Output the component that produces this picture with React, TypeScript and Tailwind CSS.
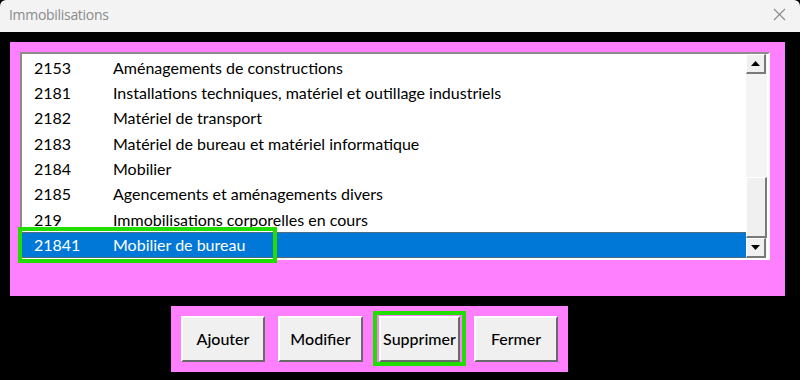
import React from "react";

const rows: [string, string][] = [
  ["2153", "Aménagements de constructions"],
  ["2181", "Installations techniques, matériel et outillage industriels"],
  ["2182", "Matériel de transport"],
  ["2183", "Matériel de bureau et matériel informatique"],
  ["2184", "Mobilier"],
  ["2185", "Agencements et aménagements divers"],
  ["219", "Immobilisations corporelles en cours"],
  ["21841", "Mobilier de bureau"],
];

const listFont = { fontFamily: "Lato, 'Open Sans', sans-serif" };

function Btn({ label, w }: { label: string; w: string }) {
  return (
    <button
      className={`h-[46px] ${w} bg-[#f0f0f0] border-t-2 border-l-2 border-t-white border-l-white border-b-2 border-r-2 border-b-[#6a6a6a] border-r-[#6a6a6a] text-[16px] font-medium text-black`}
      style={listFont}
    >
      {label}
    </button>
  );
}

function ScrollBtn({ down }: { down?: boolean }) {
  return (
    <div className="h-[20px] w-[20px] bg-[#f0f0f0] border-t border-l border-t-white border-l-white border-b-2 border-r-2 border-b-[#7a7a7a] border-r-[#7a7a7a] flex items-center justify-center">
      <svg width="9" height="5" viewBox="0 0 9 5">
        {down ? <polygon points="0,0 9,0 4.5,5" fill="#000" /> : <polygon points="0,5 9,5 4.5,0" fill="#000" />}
      </svg>
    </div>
  );
}

export default function App() {
  return (
    <div className="w-[800px] h-[380px] bg-black flex flex-col overflow-hidden">
      <div
        className="h-[32px] bg-[#f3f3f3] rounded-t-[6px] flex items-center justify-between pl-[9px] pr-[14px] pb-[3px]"
        style={{ fontFamily: "'Open Sans', 'Noto Sans', sans-serif" }}
      >
        <span className="text-[14px] text-[#8a8a8a] tracking-[-0.3px]">Immobilisations</span>
        <svg width="13" height="13" viewBox="0 0 13 13">
          <path d="M1 1 L12 12 M12 1 L1 12" stroke="#8a8a8a" strokeWidth="1.1" fill="none" />
        </svg>
      </div>
      <div className="pl-[10px] pt-[10px]">
        <div className="w-[775px] h-[254px] bg-[#ff80ff] p-[10px]">
          <div className="relative w-[750px] h-[208px] bg-white border-t-2 border-l-2 border-t-[#8c8c8c] border-l-[#8c8c8c] border-b-2 border-r-2 border-b-white border-r-[#f8f8f8] flex">
            <div className="flex-1 pt-[1px]" style={listFont}>
              {rows.map(([code, label], i) => {
                const sel = i === rows.length - 1;
                return (
                  <div
                    key={code}
                    className={`h-[25.33px] flex items-center text-[16px] ${
                      sel ? "bg-[#0078d7] text-white border-y border-dotted border-[#a06030]" : "text-black"
                    }`}
                  >
                    <span className="w-[91px] pl-[12px]">{code}</span>
                    <span>{label}</span>
                  </div>
                );
              })}
            </div>
            <div className="w-[21px] mr-[1px] flex flex-col bg-[#f4f4f4]">
              <ScrollBtn />
              <div className="flex-1 flex flex-col justify-end">
                <div className="h-[61px] bg-[#f0f0f0] border-t border-l border-t-white border-l-white border-b-2 border-r-2 border-b-[#7a7a7a] border-r-[#7a7a7a]" />
              </div>
              <ScrollBtn down />
            </div>
            <div className="absolute left-[-4px] top-[173px] w-[259px] h-[36px] border-[4px] border-[#22dd00]" />
          </div>
        </div>
      </div>
      <div className="pl-[171px] pt-[10px]">
        <div className="w-[397px] h-[66px] bg-[#ff80ff] flex items-center pl-[10px]">
          <Btn label="Ajouter" w="w-[84px]" />
          <div className="w-[13px]" />
          <Btn label="Modifier" w="w-[85px]" />
          <div className="w-[16px]" />
          <div className="relative">
            <Btn label="Supprimer" w="w-[81px]" />
            <div className="absolute left-[-6px] top-[-5px] w-[93px] h-[55px] border-[4px] border-[#22dd00]" />
          </div>
          <div className="w-[14px]" />
          <Btn label="Fermer" w="w-[84px]" />
        </div>
      </div>
    </div>
  );
}
